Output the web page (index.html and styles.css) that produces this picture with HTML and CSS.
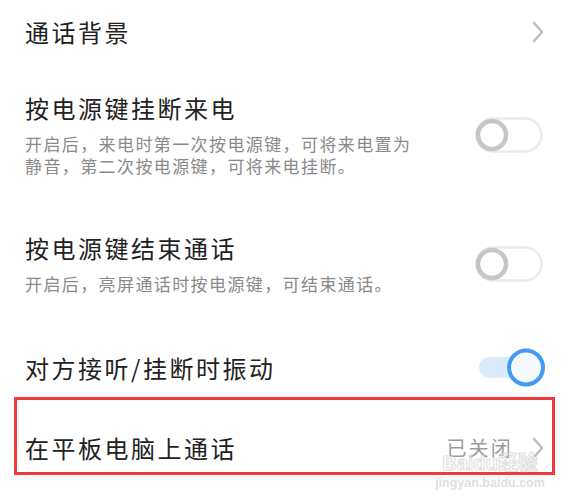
FILE: index.html
```html
<!DOCTYPE html>
<html lang="zh-CN">
<head>
<meta charset="utf-8">
<link rel="stylesheet" href="styles.css">
</head>
<body>
<div class="page">
  <div class="row row-a">
    <div class="title">通话背景</div>
    <svg class="chev" width="12" height="22" viewBox="0 0 12 22"><polyline points="2,2 10,11 2,20" fill="none" stroke="#bfbfbf" stroke-width="2.6" stroke-linecap="round" stroke-linejoin="round"/></svg>
  </div>
  <div class="row row-b">
    <div class="text">
      <div class="title">按电源键挂断来电</div>
      <div class="desc">开启后，来电时第一次按电源键，可将来电置为静音，第二次按电源键，可将来电挂断。</div>
    </div>
    <svg class="toggle-off" width="68" height="36" viewBox="0 0 68 36"><rect x="1.5" y="1.5" width="65" height="33" rx="16.5" fill="#fff" stroke="#ebebeb" stroke-width="2.5"/><circle cx="17" cy="18" r="14" fill="#fff" stroke="#c6c6c6" stroke-width="4.5"/></svg>
  </div>
  <div class="row row-c">
    <div class="text">
      <div class="title">按电源键结束通话</div>
      <div class="desc">开启后，亮屏通话时按电源键，可结束通话。</div>
    </div>
    <svg class="toggle-off" width="68" height="36" viewBox="0 0 68 36"><rect x="1.5" y="1.5" width="65" height="33" rx="16.5" fill="#fff" stroke="#ebebeb" stroke-width="2.5"/><circle cx="17" cy="18" r="14" fill="#fff" stroke="#c6c6c6" stroke-width="4.5"/></svg>
  </div>
  <div class="row row-d">
    <div class="title">对方接听/挂断时振动</div>
    <svg class="toggle-on" width="66" height="40" viewBox="0 0 66 40"><rect x="0" y="9" width="50" height="21" rx="10.5" fill="#dcebfc"/><circle cx="47" cy="19.5" r="17" fill="#f5f9fe" stroke="#3f9bf5" stroke-width="4"/></svg>
  </div>
  <div class="row row-e">
    <div class="title">在平板电脑上通话</div>
    <div class="value">已关闭</div>
    <svg class="chev" width="12" height="22" viewBox="0 0 12 22"><polyline points="2,2 10,11 2,20" fill="none" stroke="#bfbfbf" stroke-width="2.6" stroke-linecap="round" stroke-linejoin="round"/></svg>
  </div>
  <div class="highlight"></div>
  <div class="watermark">
    <div class="wm-logo">Baidu经验</div>
    <div class="wm-url">jingyan.baidu.com</div>
  </div>
</div>
</body>
</html>
```
FILE: styles.css
```css
html, body {
  margin: 0;
  padding: 0;
  background: #fff;
}
body {
  font-family: "Noto Sans CJK SC", "Noto Sans", sans-serif;
  width: 572px;
  height: 503px;
  overflow: hidden;
}
.page {
  position: relative;
  width: 572px;
  height: 503px;
}
.row {
  display: flex;
  align-items: center;
  padding: 0 29px 0 25px;
}
.title {
  font-size: 24px;
  line-height: 30px;
  letter-spacing: 2.5px;
  color: #222;
  white-space: nowrap;
}
.text {
  flex: 1;
}
.desc {
  margin-top: 10px;
  font-size: 17px;
  line-height: 22px;
  letter-spacing: 1.4px;
  color: #8a8a8a;
  max-width: 398px;
}
.row-a {
  height: 64px;
  justify-content: space-between;
}
.row-b {
  padding-top: 29px;
  padding-bottom: 28px;
}
.row-c {
  padding-top: 28px;
  padding-bottom: 28px;
}
.row-d {
  padding-top: 25px;
  padding-bottom: 25px;
  justify-content: space-between;
}
.row-d .toggle-on {
  margin-right: -2px;
}
.row-e {
  height: 70px;
}
.row-e .title {
  flex: 1;
}
.value {
  font-size: 20px;
  line-height: 26px;
  letter-spacing: 2.2px;
  color: #9c9c9c;
  margin-right: 19px;
}
.chev {
  display: block;
  flex: none;
  margin-right: -1px;
}
.toggle-off, .toggle-on {
  display: block;
  flex: none;
}
.highlight {
  position: absolute;
  left: 14px;
  top: 397px;
  width: 535px;
  height: 72px;
  border: 3px solid #f23a3a;
}
.watermark {
  position: absolute;
  left: 434px;
  top: 453px;
  width: 112px;
  text-align: center;
  font-family: "Liberation Sans", "Noto Sans CJK SC", sans-serif;
}
.wm-logo {
  font-size: 20px;
  line-height: 21px;
  font-weight: bold;
  color: rgba(255, 255, 255, 0.5);
  -webkit-text-stroke: 1px rgba(185, 185, 185, 0.5);
}
.wm-url {
  font-size: 12.5px;
  line-height: 14px;
  font-weight: bold;
  color: rgba(195, 195, 195, 0.55);
  margin-top: 2px;
}
```
